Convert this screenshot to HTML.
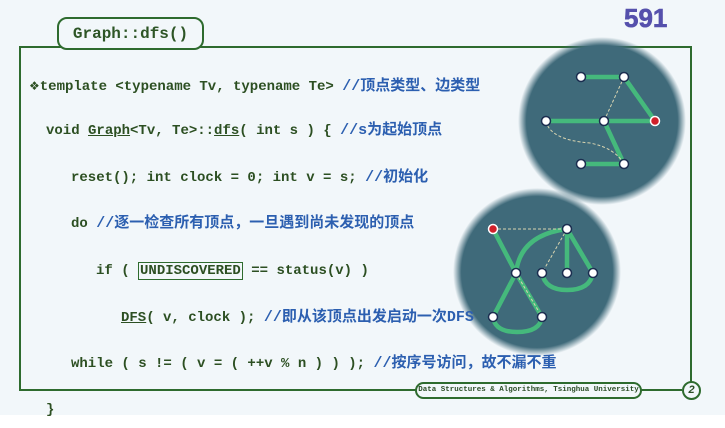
<!DOCTYPE html>
<html><head><meta charset="utf-8"><style>
body{margin:0;width:725px;height:428px;background:#fff;overflow:hidden;position:relative;font-family:"Liberation Mono","Noto Sans CJK SC",monospace}
#bg{position:absolute;left:0;top:0;width:725px;height:415px;background:#f2f7fa}
.frame{position:absolute;left:19px;top:46px;width:673px;height:344px;border:2px solid #2e6b2e;border-bottom:none;box-sizing:border-box}
.fb{position:absolute;left:19px;top:389px;width:400px;height:2px;background:#2e6b2e}
.fb2{position:absolute;left:640px;top:389px;width:42px;height:2px;background:#2e6b2e}
.title{position:absolute;left:57px;top:17px;width:147px;height:33px;border:2px solid #2e6b2e;border-radius:10px;background:#f2f7fa;box-sizing:border-box;font-family:"Liberation Mono",monospace;font-weight:bold;font-size:16px;color:#2d5526;text-align:center;line-height:30px}
.num{position:absolute;left:624px;top:3px;font-family:"Liberation Sans",sans-serif;font-weight:bold;font-size:26px;color:#5550ac;-webkit-text-stroke:0.6px #5550ac}
.l{position:absolute;font-size:14px;font-weight:bold;color:#2c4f22;white-space:pre;line-height:18px}
.c{color:#2c5fb0;font-family:"Liberation Mono","Noto Sans CJK SC",sans-serif;font-size:15px}
u{text-decoration:underline}
.box{border:1.5px solid #2e6b2e;padding:0 1px}
.pill{position:absolute;left:415px;top:382px;width:227px;height:17px;border:2px solid #2e6b2e;border-radius:9px;background:#f2f7fa;box-sizing:border-box;font-family:"Liberation Mono",monospace;font-size:7.5px;color:#2a4d25;text-align:center;line-height:13px;font-weight:bold}
.pg{position:absolute;left:682px;top:381px;width:19px;height:19px;border:2px solid #2e6b2e;border-radius:50%;box-sizing:border-box;background:#f2f7fa;font-family:"Liberation Sans",sans-serif;font-style:italic;font-weight:bold;font-size:11px;color:#2a4d25;text-align:center;line-height:15px}
svg{position:absolute;left:0;top:0}
</style></head><body>
<div id="bg"></div>
<div class="frame"></div>
<div class="fb"></div><div class="fb2"></div>
<div class="title">Graph::dfs()</div>
<div class="num">591</div>
<svg width="725" height="428">
<defs><radialGradient id="g"><stop offset="0.9" stop-color="#3f6a7a"/><stop offset="1" stop-color="#3f6a7a" stop-opacity="0"/></radialGradient></defs>
<circle cx="602" cy="121" r="84" fill="url(#g)"/>
<circle cx="537" cy="272" r="84" fill="url(#g)"/>
<g fill="none" stroke="#45b97c" stroke-width="4.5" stroke-linecap="round">
<path d="M581 77H624L655 121M546 121H655M604 121L624 164H581"/>
<path d="M493 229L516 273L493 317M516 273L542 317M567 229V273M567 229L593 273M567 229Q520 235 516 273M542 273Q545 290 567 290Q590 290 593 273M493 317Q495 332 517 332Q540 332 542 317"/>
</g>
<g fill="none" stroke="#d8d4b0" stroke-width="1" stroke-dasharray="3 2">
<path d="M624 77L604 121M546 121Q550 140 590 143Q615 148 624 164M493 229H567M567 229L542 273M516 273L542 317"/>
</g>
<g fill="#fff" stroke="#1c2e50" stroke-width="1.5">
<circle cx="581" cy="77" r="4.5"/><circle cx="624" cy="77" r="4.5"/><circle cx="546" cy="121" r="4.5"/><circle cx="604" cy="121" r="4.5"/><circle cx="581" cy="164" r="4.5"/><circle cx="624" cy="164" r="4.5"/>
<circle cx="567" cy="229" r="4.5"/><circle cx="516" cy="273" r="4.5"/><circle cx="542" cy="273" r="4.5"/><circle cx="567" cy="273" r="4.5"/><circle cx="593" cy="273" r="4.5"/><circle cx="493" cy="317" r="4.5"/><circle cx="542" cy="317" r="4.5"/>
<circle cx="655" cy="121" r="4.5" fill="#d0202a" stroke="#fff"/><circle cx="493" cy="229" r="4.5" fill="#d0202a" stroke="#fff"/>
</g>
</svg>
<div class="l" style="left:29px;top:77px"><span style="font-family:'DejaVu Sans';font-size:12px">❖</span>template &lt;typename Tv, typename Te&gt; <span class="c">//顶点类型、边类型</span></div>
<div class="l" style="left:46px;top:122px">void <u>Graph</u>&lt;Tv, Te&gt;::<u>dfs</u>( int s ) { <span class="c">//s为起始顶点</span></div>
<div class="l" style="left:71px;top:169px">reset(); int clock = 0; int v = s; <span class="c">//初始化</span></div>
<div class="l" style="left:71px;top:215px">do <span class="c">//逐一检查所有顶点，一旦遇到尚未发现的顶点</span></div>
<div class="l" style="left:96px;top:262px">if ( <span class="box">UNDISCOVERED</span> == status(v) )</div>
<div class="l" style="left:121px;top:309px"><u>DFS</u>( v, clock ); <span class="c">//即从该顶点出发启动一次DFS</span></div>
<div class="l" style="left:71px;top:355px">while ( s != ( v = ( ++v % n ) ) ); <span class="c">//按序号访问，故不漏不重</span></div>
<div class="l" style="left:46px;top:401px">}</div>
<div class="pill">Data Structures &amp; Algorithms, Tsinghua University</div>
<div class="pg">2</div>
</body></html>
